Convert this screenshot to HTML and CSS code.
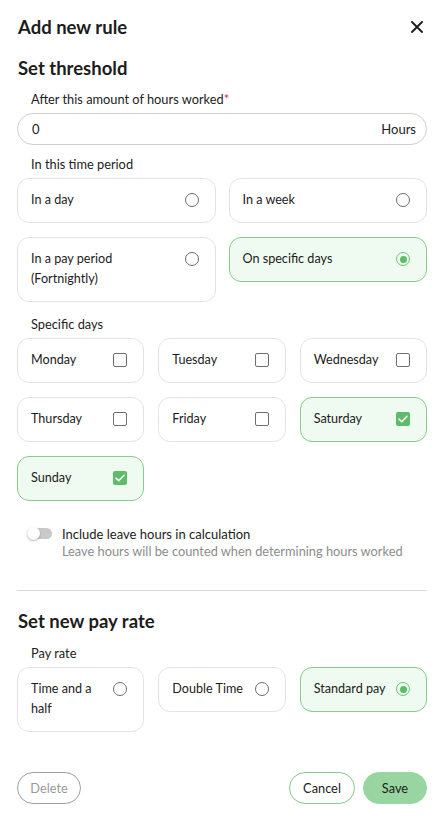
FILE: index.html
```html
<!DOCTYPE html>
<html>
<head>
<meta charset="utf-8">
<link rel="stylesheet" href="styles.css">
</head>
<body>
<div class="modal">
  <div class="header">
    <h1 class="title">Add new rule</h1>
    <button class="close" aria-label="Close">
      <svg width="12" height="12" viewBox="0 0 12 12"><path d="M1 1L11 11M11 1L1 11" stroke="#1a1a1a" stroke-width="1.8" stroke-linecap="round"/></svg>
    </button>
  </div>

  <h2 class="section">Set threshold</h2>

  <div class="field field-first">
    <div class="label">After this amount of hours worked<span class="req">*</span></div>
    <div class="input">
      <span class="value">0</span>
      <span class="unit">Hours</span>
    </div>
  </div>

  <div class="field field-period">
    <div class="label">In this time period</div>
    <div class="grid two">
      <div class="card"><span class="text">In a day</span><span class="radio"></span></div>
      <div class="card"><span class="text">In a week</span><span class="radio"></span></div>
      <div class="card"><span class="text">In a pay period<br>(Fortnightly)</span><span class="radio"></span></div>
      <div class="card selected"><span class="text">On specific days</span><span class="radio on"></span></div>
    </div>
  </div>

  <div class="field field-days">
    <div class="label">Specific days</div>
    <div class="grid three">
      <div class="card"><span class="text">Monday</span><span class="check"></span></div>
      <div class="card"><span class="text">Tuesday</span><span class="check"></span></div>
      <div class="card"><span class="text">Wednesday</span><span class="check"></span></div>
      <div class="card"><span class="text">Thursday</span><span class="check"></span></div>
      <div class="card"><span class="text">Friday</span><span class="check"></span></div>
      <div class="card selected"><span class="text">Saturday</span><span class="check on"><svg width="10" height="8" viewBox="0 0 10 8"><path d="M1 4.2L3.7 6.7L9 1.3" fill="none" stroke="#fff" stroke-width="1.6" stroke-linecap="round" stroke-linejoin="round"/></svg></span></div>
      <div class="card selected"><span class="text">Sunday</span><span class="check on"><svg width="10" height="8" viewBox="0 0 10 8"><path d="M1 4.2L3.7 6.7L9 1.3" fill="none" stroke="#fff" stroke-width="1.6" stroke-linecap="round" stroke-linejoin="round"/></svg></span></div>
    </div>
  </div>

  <div class="toggle-row">
    <span class="toggle"><span class="knob"></span></span>
    <div class="toggle-text">
      <div class="toggle-title">Include leave hours in calculation</div>
      <div class="toggle-sub">Leave hours will be counted when determining hours worked</div>
    </div>
  </div>

  <hr class="divider">

  <h2 class="section section-pay">Set new pay rate</h2>

  <div class="field field-pay">
    <div class="label">Pay rate</div>
    <div class="grid three">
      <div class="card"><span class="text">Time and a half</span><span class="radio"></span></div>
      <div class="card"><span class="text">Double Time</span><span class="radio"></span></div>
      <div class="card selected"><span class="text">Standard pay</span><span class="radio on"></span></div>
    </div>
  </div>

  <div class="footer">
    <button class="btn btn-delete">Delete</button>
    <div class="actions">
      <button class="btn btn-cancel">Cancel</button>
      <button class="btn btn-save">Save</button>
    </div>
  </div>
</div>
</body>
</html>
```

FILE: styles.css
```css
* { box-sizing: border-box; }
html, body { margin: 0; padding: 0; background: #fff; }
body {
  font-family: "Lato", "Noto Sans", "Liberation Sans", sans-serif;
  color: #1c1c1c;
}
.modal {
  padding: 16px 17px 0 17px;
  display: flex;
  flex-direction: column;
}
.header {
  display: flex;
  justify-content: space-between;
  align-items: center;
  height: 22px;
}
.title {
  margin: 0 0 0 1px;
  font-size: 18.5px;
  line-height: 22px;
  font-weight: 700;
}
.close {
  border: 0;
  background: none;
  padding: 0;
  margin-right: 4px;
  width: 12px;
  height: 12px;
  display: flex;
}
.section {
  margin: 19px 0 0 1px;
  font-size: 18.5px;
  line-height: 22px;
  font-weight: 700;
}
.field {
  display: flex;
  flex-direction: column;
  gap: 6px;
}
.field-first { margin-top: 12px; }
.field-period { margin-top: 11px; }
.field-days { margin-top: 14px; }
.field-pay { margin-top: 13px; }
.label {
  font-size: 12.8px;
  line-height: 16px;
  padding-left: 14px;
  color: #222;
}
.req { color: #d0342c; }
.input {
  height: 32px;
  border: 1px solid #cfcfcf;
  border-radius: 16px;
  display: flex;
  align-items: center;
  justify-content: space-between;
  padding: 0 10px 0 14px;
  font-size: 13px;
}
.grid {
  display: grid;
  gap: 14px 13px;
  align-items: start;
}
.grid.two { grid-template-columns: 1fr 1fr; }
.grid.three { grid-template-columns: 1fr 1fr 1fr; column-gap: 14px; }
.card {
  border: 1px solid #e3e3e3;
  border-radius: 12px;
  padding: 11px 16px 12px 13px;
  display: flex;
  justify-content: space-between;
  align-items: flex-start;
  gap: 6px;
  font-size: 12.6px;
  line-height: 20px;
  min-height: 45px;
  background: #fff;
}
.card.selected {
  border-color: #86cc8e;
  background: #effaf0;
}
.text { color: #1c1c1c; }
.radio {
  flex: none;
  width: 14px;
  height: 14px;
  border-radius: 50%;
  border: 1.5px solid #6b6b6b;
  margin-top: 3px;
  display: flex;
  align-items: center;
  justify-content: center;
}
.radio.on { border-color: #6cc478; }
.radio.on::after {
  content: "";
  width: 7px;
  height: 7px;
  border-radius: 50%;
  background: #5bbd69;
}
.check {
  flex: none;
  width: 14px;
  height: 14px;
  border: 1.5px solid #6f6f6f;
  border-radius: 2px;
  margin-top: 3px;
  display: flex;
  align-items: center;
  justify-content: center;
}
.check.on {
  border: 0;
  background: #5cbc69;
}
.toggle-row {
  display: flex;
  align-items: flex-start;
  margin-top: 25px;
  padding-left: 10px;
  gap: 10px;
}
.toggle {
  position: relative;
  flex: none;
  width: 25px;
  height: 11px;
  margin-top: 2px;
  border-radius: 6px;
  background: #c9c9c9;
}
.knob {
  position: absolute;
  left: 0;
  top: -1px;
  width: 13px;
  height: 13px;
  border-radius: 50%;
  background: #fff;
  box-shadow: 0 1px 2px rgba(0,0,0,0.3);
}
.toggle-title {
  font-size: 13px;
  line-height: 16px;
  color: #1c1c1c;
}
.toggle-sub {
  margin-top: 1px;
  font-size: 12.8px;
  line-height: 16px;
  color: #8c8c8c;
}
.divider {
  margin: 31px 0 0 0;
  border: 0;
  border-top: 1px solid #d8d8d8;
  height: 0;
}
.footer {
  margin-top: 40px;
  display: flex;
  justify-content: space-between;
  align-items: center;
}
.actions { display: flex; gap: 8px; }
.btn {
  height: 32px;
  border-radius: 16px;
  font-family: inherit;
  font-size: 12.8px;
  padding: 0 10px;
  background: #fff;
  cursor: pointer;
}
.btn-delete { border: 1px solid #a0a0a0; color: #9a9a9a; width: 64px; }
.btn-cancel { border: 1px solid #82c98b; color: #1c1c1c; width: 66px; }
.btn-save { border: 1px solid #98d5a0; background: #98d5a0; color: #1c1c1c; width: 64px; }
```
